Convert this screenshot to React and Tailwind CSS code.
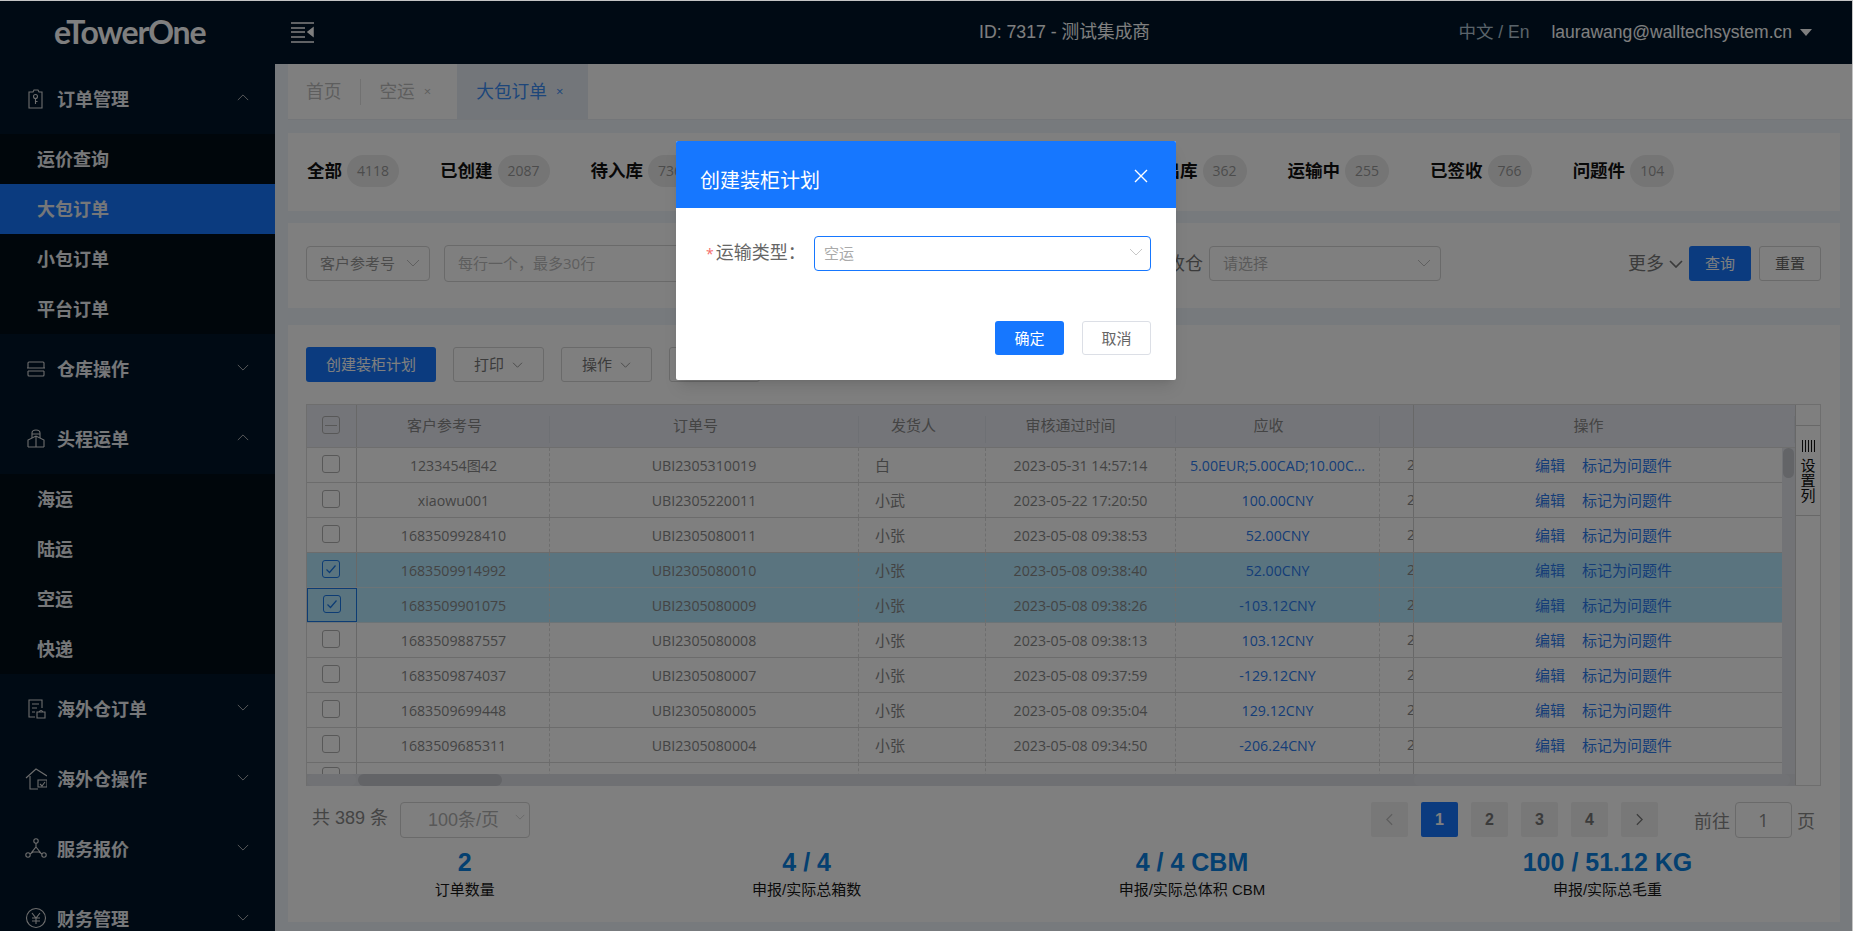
import React from 'react';

const Chevron = ({ up, className, sw = 1 }) => (
  <svg viewBox="0 0 14 8" fill="none" stroke="currentColor" strokeWidth={sw} className={className}>
    <path d={up ? 'M1 7 L7 1 L13 7' : 'M1 1 L7 7 L13 1'} />
  </svg>
);

const icons = {
  tag: (
    <>
      <path d="M4 5 H8 L9 3 H13 L14 5 H17 V21 H4 Z" />
      <circle cx="10.5" cy="9.5" r="2" />
      <path d="M10.5 11.5 V17 M10.5 14.5 H12.5" />
    </>
  ),
  box: <path d="M3 11 V6 Q3 5 4 5 H18 Q19 5 19 6 V11 M2 11 H20 M3 14 H19 M3 14 V18 Q3 19 4 19 H18 Q19 19 19 18 V14" />,
  ship: (
    <>
      <path d="M7 11 V6 Q7 3 11 3 Q15 3 15 6 V11" />
      <path d="M3 20 V13 L11 9 L19 13 V20 M3 20 H19 M11 9 V20 M7 7 H15" />
    </>
  ),
  receipt: (
    <>
      <path d="M10 20 H4 V3 H17 V11 M7 7 H14 M7 11 H12 M7 15 H10" />
      <path d="M12 15 H20 V21 H12 Z M14 15 Q16 12 18 15" />
    </>
  ),
  house: (
    <>
      <path d="M1 11 L11 2 L22 9 M5 9 V22 H13" />
      <path d="M13 13 H22 V20 H13 Z M15 17 L17 19 L20 15" />
    </>
  ),
  nodes: (
    <>
      <circle cx="11" cy="4" r="2.2" />
      <circle cx="3" cy="18" r="2.2" />
      <circle cx="19" cy="18" r="2.2" />
      <path d="M11 6 V10 M5 17 L8 15 M17 17 L14 15 M11 10 L15 15 H7 Z" />
    </>
  ),
  yen: (
    <>
      <circle cx="11" cy="11" r="9.5" />
      <path d="M7 6 L11 11 L15 6 M11 11 V17 M7 11 H15 M7 14 H15" />
    </>
  ),
};

const MenuIcon = ({ name }) => (
  <svg viewBox="0 0 22 24" fill="none" stroke="currentColor" strokeWidth="1.1" className="h-6 w-[22px] text-[#dcdcdc]">
    {icons[name]}
  </svg>
);

const MenuItem = ({ icon, label, open }) => (
  <div className="flex h-[70px] items-center pl-[25px] pr-[26px] text-[18px] font-bold text-[#eceff2]">
    <MenuIcon name={icon} />
    <span className="ml-[10px] flex-1">{label}</span>
    <Chevron up={open} className="mb-[4px] h-[7px] w-[12px] text-[#c8c8c8]" />
  </div>
);

const SubMenu = ({ items, active }) => (
  <div className="bg-[#000c17]">
    {items.map((t) => (
      <div
        key={t}
        className={
          t === active
            ? 'flex h-[50px] items-center bg-[#1677ff] pl-[37px] text-[18px] font-bold text-[#eceff2]'
            : 'flex h-[50px] items-center pl-[37px] text-[18px] font-bold text-[#eceff2]'
        }
      >
        {t}
      </div>
    ))}
  </div>
);

const Sidebar = () => (
  <div className="h-[867px] w-[275px] shrink-0 overflow-hidden bg-[#001529]">
    <MenuItem icon="tag" label="订单管理" open />
    <SubMenu items={['运价查询', '大包订单', '小包订单', '平台订单']} active="大包订单" />
    <MenuItem icon="box" label="仓库操作" />
    <MenuItem icon="ship" label="头程运单" open />
    <SubMenu items={['海运', '陆运', '空运', '快递']} />
    <MenuItem icon="receipt" label="海外仓订单" />
    <MenuItem icon="house" label="海外仓操作" />
    <MenuItem icon="nodes" label="服务报价" />
    <MenuItem icon="yen" label="财务管理" />
  </div>
);

const Header = () => (
  <div className="flex h-[63px] items-center bg-[#001529] text-white">
    <div className="w-[275px] shrink-0 pl-[54px] pb-[2px] font-['Lato',sans-serif] text-[32px] font-bold leading-none tracking-[-1.2px]">
      eTowerOne
    </div>
    <svg viewBox="0 0 23 21" fill="none" stroke="currentColor" strokeWidth="1.5" className="ml-[16px] h-[21px] w-[23px]">
      <path d="M0 1 H23 M0 10 H14 M0 20 H23 M0 6 H14 M0 15 H14" />
      <path d="M22 6 L17 10 L22 14 Z" fill="currentColor" />
    </svg>
    <div className="ml-[665px] font-['Liberation_Sans','Noto_Sans_CJK_SC',sans-serif] text-[17.7px]">
      ID: 7317 - 测试集成商
    </div>
    <div className="ml-auto flex items-center pr-[40px] font-['Liberation_Sans','Noto_Sans_CJK_SC',sans-serif]">
      <span className="text-[17.5px] text-[#b5c6d4]">中文 / En</span>
      <span className="ml-[22px] text-[17.5px]">laurawang@walltechsystem.cn</span>
      <span className="ml-[8px] h-0 w-0 border-x-[6px] border-t-[7px] border-x-transparent border-t-white" />
    </div>
  </div>
);

const TabBar = () => (
  <div className="ml-[13px] flex h-[56px] items-center border-b border-[#e8edf3] bg-white pl-[18px] text-[17.7px] text-[#bdbdbd]">
    <span>首页</span>
    <span className="ml-[19px] h-[26px] w-px bg-[#e3e3e3]" />
    <span className="ml-[18px]">空运</span>
    <span className="ml-[9px] text-[13px]">×</span>
    <div className="ml-[26px] flex h-full w-[131px] items-center bg-[#e6ecf5] pl-[19px] text-[#3a8cf5]">
      大包订单
      <span className="ml-[9px] text-[13px]">×</span>
    </div>
  </div>
);

const stats = [
  ['全部', '4118', 'ml-0'],
  ['已创建', '2087', 'ml-[41px]'],
  ['待入库', '736', 'ml-[41px]'],
  ['已出库', '362', 'ml-[453px]'],
  ['运输中', '255', 'ml-[41px]'],
  ['已签收', '766', 'ml-[41px]'],
  ['问题件', '104', 'ml-[41px]'],
];

const StatusCard = () => (
  <div className="ml-[13px] mr-[12px] mt-[13px] flex h-[78px] items-center bg-white pb-[3px] pl-[19px]">
    {stats.map(([label, n, ml]) => (
      <div key={label} className={`${ml} flex items-center`}>
        <span className="text-[17.5px] font-bold text-[#111]">{label}</span>
        <span className="ml-[5px] flex h-[32px] items-center rounded-full bg-[#ebebeb] px-[10px] text-[14px] text-[#999]">{n}</span>
      </div>
    ))}
  </div>
);

const SelectBox = ({ text, className }) => (
  <div className={`flex h-[35px] items-center justify-between rounded-[4px] border border-[#d4d4d4] pl-[13px] pr-[9px] text-[15px] text-[#b4b4b4] ${className}`}>
    <span>{text}</span>
    <Chevron className="mb-[2px] h-[8px] w-[14px] text-[#c0c0c0]" />
  </div>
);

const FilterCard = () => (
  <div className="ml-[13px] mr-[12px] mt-[12px] flex h-[85px] items-center bg-white pb-[4px] pl-[18px] pr-[19px]">
    <SelectBox text="客户参考号" className="w-[124px] !text-[#999]" />
    <div className="ml-[14px] flex h-[37px] w-[356px] items-center rounded-[4px] border border-[#d4d4d4] pl-[13px] text-[15px] text-[#bdbdbd]">
      每行一个，最多30行
    </div>
    <span className="ml-[367px] text-[18px] text-[#777]">收仓</span>
    <SelectBox text="请选择" className="ml-[6px] w-[232px]" />
    <span className="ml-auto text-[18px] text-[#777]">更多</span>
    <Chevron sw={1.7} className="ml-[5px] h-[8px] w-[14px] text-[#777]" />
    <button className="ml-[6px] h-[35px] w-[62px] rounded-[3px] bg-[#1677ff] text-[15px] text-white">查询</button>
    <button className="ml-[8px] h-[35px] w-[62px] rounded-[3px] border border-[#d4d4d4] text-[15px] text-[#666]">重置</button>
  </div>
);

const rows = [
  ['1233454图42', 'UBI2305310019', '白', '2023-05-31 14:57:14', '5.00EUR;5.00CAD;10.00C...'],
  ['xiaowu001', 'UBI2305220011', '小武', '2023-05-22 17:20:50', '100.00CNY'],
  ['1683509928410', 'UBI2305080011', '小张', '2023-05-08 09:38:53', '52.00CNY'],
  ['1683509914992', 'UBI2305080010', '小张', '2023-05-08 09:38:40', '52.00CNY', 'sel'],
  ['1683509901075', 'UBI2305080009', '小张', '2023-05-08 09:38:26', '-103.12CNY', 'focus'],
  ['1683509887557', 'UBI2305080008', '小张', '2023-05-08 09:38:13', '103.12CNY'],
  ['1683509874037', 'UBI2305080007', '小张', '2023-05-08 09:37:59', '-129.12CNY'],
  ['1683509699448', 'UBI2305080005', '小张', '2023-05-08 09:35:04', '129.12CNY'],
  ['1683509685311', 'UBI2305080004', '小张', '2023-05-08 09:34:50', '-206.24CNY'],
];

const Checkbox = ({ checked, minus }) => (
  <span
    className={
      checked
        ? 'flex h-[18px] w-[18px] items-center justify-center rounded-[3px] border border-[#1a78e8] text-[#1a78e8]'
        : 'flex h-[18px] w-[18px] items-center justify-center rounded-[3px] border border-[#b0b0b0] text-[#bbb]'
    }
  >
    {checked && (
      <svg viewBox="0 0 12 12" fill="none" stroke="currentColor" strokeWidth="1.2" className="h-3 w-3">
        <path d="M1.5 6.5 L4.5 9.5 L10.5 2.5" />
      </svg>
    )}
    {minus && <span className="h-px w-[12px] bg-[#b0b0b0]" />}
  </span>
);

const HeadCell = ({ className, children }) => (
  <div className={`relative flex h-full items-center justify-center pb-[2px] text-[15px] ${className}`}>
    {children}
    <span className="absolute right-0 top-[11px] h-[27px] w-px bg-[#dde0e8]" />
  </div>
);

const TableRow = ({ row }) => {
  const [ref, order, who, date, money, state] = row;
  const picked = state === 'sel' || state === 'focus';
  return (
    <div className={picked ? 'flex h-[35px] border-b border-[#d8e8ef] bg-[#b4e9ff]' : 'flex h-[35px] border-b border-[#d8d8d8] bg-white'}>
      <div
        className={
          state === 'focus'
            ? 'flex w-[50px] shrink-0 items-center justify-center border border-[#1a78e8] pb-[2px] pr-[1px]'
            : 'flex w-[50px] shrink-0 items-center justify-center border-r border-[#d0d0d0] pb-[2px] pr-[1px]'
        }
      >
        <Checkbox checked={picked} />
      </div>
      <div className="flex w-[193px] items-center justify-center border-r border-dashed border-[#dcdcdc] pl-px pt-px">{ref}</div>
      <div className="flex w-[309px] items-center justify-center border-r border-dashed border-[#dcdcdc] pt-px">{order}</div>
      <div className="flex w-[127px] items-center border-r border-dashed border-[#dcdcdc] pl-[16px] text-[15px]">{who}</div>
      <div className="flex w-[190px] items-center justify-center border-r border-dashed border-[#dcdcdc] pt-px">{date}</div>
      <div className="flex w-[204px] items-center justify-center border-r border-dashed border-[#dcdcdc] pt-px text-[#2a7bef]">{money}</div>
      <div className="flex w-[34px] items-center overflow-hidden whitespace-nowrap border-r border-[#d0d0d0] pl-[27px]">2023-05</div>
      <div className="flex w-[368px] items-center justify-center gap-[17px] pl-[11px] text-[15px] text-[#2a7bef]">
        <span>编辑</span>
        <span>标记为问题件</span>
      </div>
    </div>
  );
};

const OrderTable = () => (
  <div className="flex h-[382px] border border-[#dcdcdc] text-[14.2px] text-[#888]">
    <div className="w-[1488px] shrink-0">
      <div className="flex h-[43px] border-b border-[#dcdcdc] bg-[#e9ebf2]">
        <div className="flex w-[50px] shrink-0 items-center justify-center border-r border-[#d0d0d0] pb-[2px] pr-[1px]">
          <Checkbox minus />
        </div>
        <HeadCell className="w-[193px] pr-[18px]">客户参考号</HeadCell>
        <HeadCell className="w-[309px] pr-[18px]">订单号</HeadCell>
        <HeadCell className="w-[127px] pr-[18px]">发货人</HeadCell>
        <HeadCell className="w-[190px] pr-[21px]">审核通过时间</HeadCell>
        <HeadCell className="w-[204px] pr-[19px]">应收</HeadCell>
        <div className="w-[34px] border-r border-[#d0d0d0]" />
        <HeadCell className="w-[381px] pr-[32px]">操作</HeadCell>
      </div>
      <div className="flex h-[326px] overflow-hidden">
        <div className="w-[1475px] shrink-0">
          {rows.map((r) => (
            <TableRow key={r[1]} row={r} />
          ))}
          <div className="flex h-[35px]">
            <div className="flex w-[50px] items-start justify-center border-r border-[#d0d0d0] pr-[1px] pt-[4px]">
              <Checkbox />
            </div>
            <div className="w-[193px] border-r border-dashed border-[#dcdcdc]" />
            <div className="w-[309px] border-r border-dashed border-[#dcdcdc]" />
            <div className="w-[127px] border-r border-dashed border-[#dcdcdc]" />
            <div className="w-[190px] border-r border-dashed border-[#dcdcdc]" />
            <div className="w-[204px] border-r border-dashed border-[#dcdcdc]" />
            <div className="w-[34px] border-r border-[#d0d0d0]" />
          </div>
        </div>
        <div className="w-[13px] shrink-0 bg-[#e4e6ec] px-px">
          <div className="h-[30px] rounded-full bg-[#c6c8ce]" />
        </div>
      </div>
      <div className="flex h-[12px] bg-[#dfe1e6]">
        <div className="w-[49px] rounded-full bg-[#e3e5ea]" />
        <div className="ml-[2px] w-[144px] rounded-full bg-[#c6c8ce]" />
        <div className="ml-[912px] w-[376px] rounded-full bg-[#e3e5ea]" />
      </div>
    </div>
    <div className="flex-1 border-l border-[#d0d0d0]">
      <div className="mt-[20px] flex h-[91px] flex-col items-center border-y border-[#d0d0d0] pt-[14px] text-[15px] leading-[15px] text-[#111]">
        <span className="mb-[6px] h-[12px] w-[13px] bg-[repeating-linear-gradient(90deg,#111_0,#111_1px,transparent_1px,transparent_3px)]" />
        <span>设</span>
        <span>置</span>
        <span>列</span>
      </div>
    </div>
  </div>
);

const PageBtn = ({ active, dim, children }) => (
  <span
    className={
      active
        ? 'flex h-[35px] w-[37px] items-center justify-center rounded-[2px] bg-[#1677ff] font-bold text-white'
        : dim
        ? 'flex h-[35px] w-[37px] items-center justify-center rounded-[2px] bg-[#f0f0f0] text-[#bbb]'
        : 'flex h-[35px] w-[37px] items-center justify-center rounded-[2px] bg-[#f0f0f0] font-bold text-[#777]'
    }
  >
    {children}
  </span>
);

const Pagination = () => (
  <div className="mt-[16px] flex h-[36px] items-start text-[#888]">
    <span className="ml-[6px] mt-[3px] font-['Liberation_Sans','Noto_Sans_CJK_SC',sans-serif] text-[18px]">共 389 条</span>
    <div className="relative ml-[12px] flex h-[36px] w-[130px] items-center rounded-[4px] border border-[#d4d4d4] pl-[27px] font-['Liberation_Sans','Noto_Sans_CJK_SC',sans-serif] text-[18px] text-[#b0b0b0]">
      100条/页
      <Chevron className="absolute right-[4px] top-[11px] h-[6px] w-[10px] text-[#c4c4c4]" />
    </div>
    <div className="ml-auto flex gap-[13px] font-['Liberation_Sans',sans-serif] text-[16px]">
      <PageBtn dim>
        <svg viewBox="0 0 8 14" fill="none" stroke="currentColor" strokeWidth="1.4" className="h-[13px] w-[7px]">
          <path d="M7 1 L1 7 L7 13" />
        </svg>
      </PageBtn>
      <PageBtn active>1</PageBtn>
      <PageBtn>2</PageBtn>
      <PageBtn>3</PageBtn>
      <PageBtn>4</PageBtn>
      <PageBtn>
        <svg viewBox="0 0 8 14" fill="none" stroke="currentColor" strokeWidth="1.4" className="h-[13px] w-[7px]">
          <path d="M1 1 L7 7 L1 13" />
        </svg>
      </PageBtn>
    </div>
    <span className="ml-[36px] mt-[6px] text-[18px] leading-[26px]">前往</span>
    <div className="ml-[5px] flex h-[36px] w-[57px] items-center justify-center rounded-[4px] border border-[#d4d4d4] text-[18px]">1</div>
    <span className="ml-[5px] mr-[6px] mt-[6px] text-[18px] leading-[26px]">页</span>
  </div>
);

const totals = [
  ['2', '订单数量'],
  ['4 / 4', '申报/实际总箱数'],
  ['4 / 4 CBM', '申报/实际总体积 CBM'],
  ['100 / 51.12 KG', '申报/实际总毛重'],
];

const Totals = () => (
  <div className="mt-[10px] flex justify-around font-['Liberation_Sans','Noto_Sans_CJK_SC',sans-serif]">
    {totals.map(([v, l]) => (
      <div key={l} className="flex flex-col items-center">
        <span className="text-[25px] font-bold leading-[28px] text-[#0a80e0]">{v}</span>
        <span className="mt-[4px] text-[15px] leading-[20px] text-[#161616]">{l}</span>
      </div>
    ))}
  </div>
);

const OrderCard = () => (
  <div className="ml-[13px] mr-[12px] mt-[17px] h-[597px] bg-white pl-[18px] pr-[19px] pt-[22px]">
    <div className="mb-[22px] flex h-[35px] gap-[17px] text-[15px]">
      <button className="w-[130px] rounded-[3px] bg-[#1677ff] text-white">创建装柜计划</button>
      <button className="flex w-[91px] items-center justify-center gap-[8px] rounded-[3px] border border-[#d4d4d4] text-[#777]">
        打印 <Chevron className="h-[6px] w-[11px]" />
      </button>
      <button className="flex w-[91px] items-center justify-center gap-[8px] rounded-[3px] border border-[#d4d4d4] text-[#777]">
        操作 <Chevron className="h-[6px] w-[11px]" />
      </button>
      <button className="w-[91px] rounded-[3px] border border-[#d4d4d4]" />
    </div>
    <OrderTable />
    <Pagination />
    <Totals />
  </div>
);

const Modal = () => (
  <div className="absolute inset-0 bg-black/50">
    <div className="ml-[676px] mt-[140px] h-[239px] w-[500px] overflow-hidden rounded-[2px] bg-white shadow-lg">
      <div className="flex h-[67px] items-center justify-between bg-[#1677ff] pl-[24px] pr-[28px] text-white">
        <span className="mt-[12px] text-[20px]">创建装柜计划</span>
        <svg viewBox="0 0 14 14" fill="none" stroke="currentColor" strokeWidth="1.4" className="mt-[3px] h-[14px] w-[14px]">
          <path d="M1 1 L13 13 M13 1 L1 13" />
        </svg>
      </div>
      <div className="flex pl-[30px] pr-[25px] pt-[28px]">
        <span className="mt-[3px] w-[108px] whitespace-nowrap text-[18px] text-[#666]">
          <span className="mr-[2px] text-[14px] text-[#f56c6c]">*</span>运输类型：
        </span>
        <div className="flex h-[35px] w-[337px] items-center justify-between rounded-[4px] border border-[#1677ff] pl-[9px] pr-[7px] text-[15px] text-[#aaa]">
          空运
          <Chevron className="mb-[3px] h-[8px] w-[14px] text-[#c8c8c8]" />
        </div>
      </div>
      <div className="mt-[50px] flex justify-end gap-[18px] pr-[25px] text-[15px]">
        <button className="h-[34px] w-[69px] rounded-[3px] bg-[#1677ff] text-white">确定</button>
        <button className="h-[34px] w-[69px] rounded-[3px] border border-[#dcdfe6] text-[#666]">取消</button>
      </div>
    </div>
  </div>
);

export default function App() {
  return (
    <div className="h-[931px] w-full overflow-hidden border-r border-t border-[#c4c4c4] font-['Open_Sans','Noto_Sans_CJK_SC',sans-serif]">
      <div className="relative h-[930px]">
        <Header />
        <div className="flex">
          <Sidebar />
          <div className="min-w-0 flex-1 bg-[#eff4fb] pb-[10px]">
            <TabBar />
            <StatusCard />
            <FilterCard />
            <OrderCard />
          </div>
        </div>
        <Modal />
      </div>
    </div>
  );
}
